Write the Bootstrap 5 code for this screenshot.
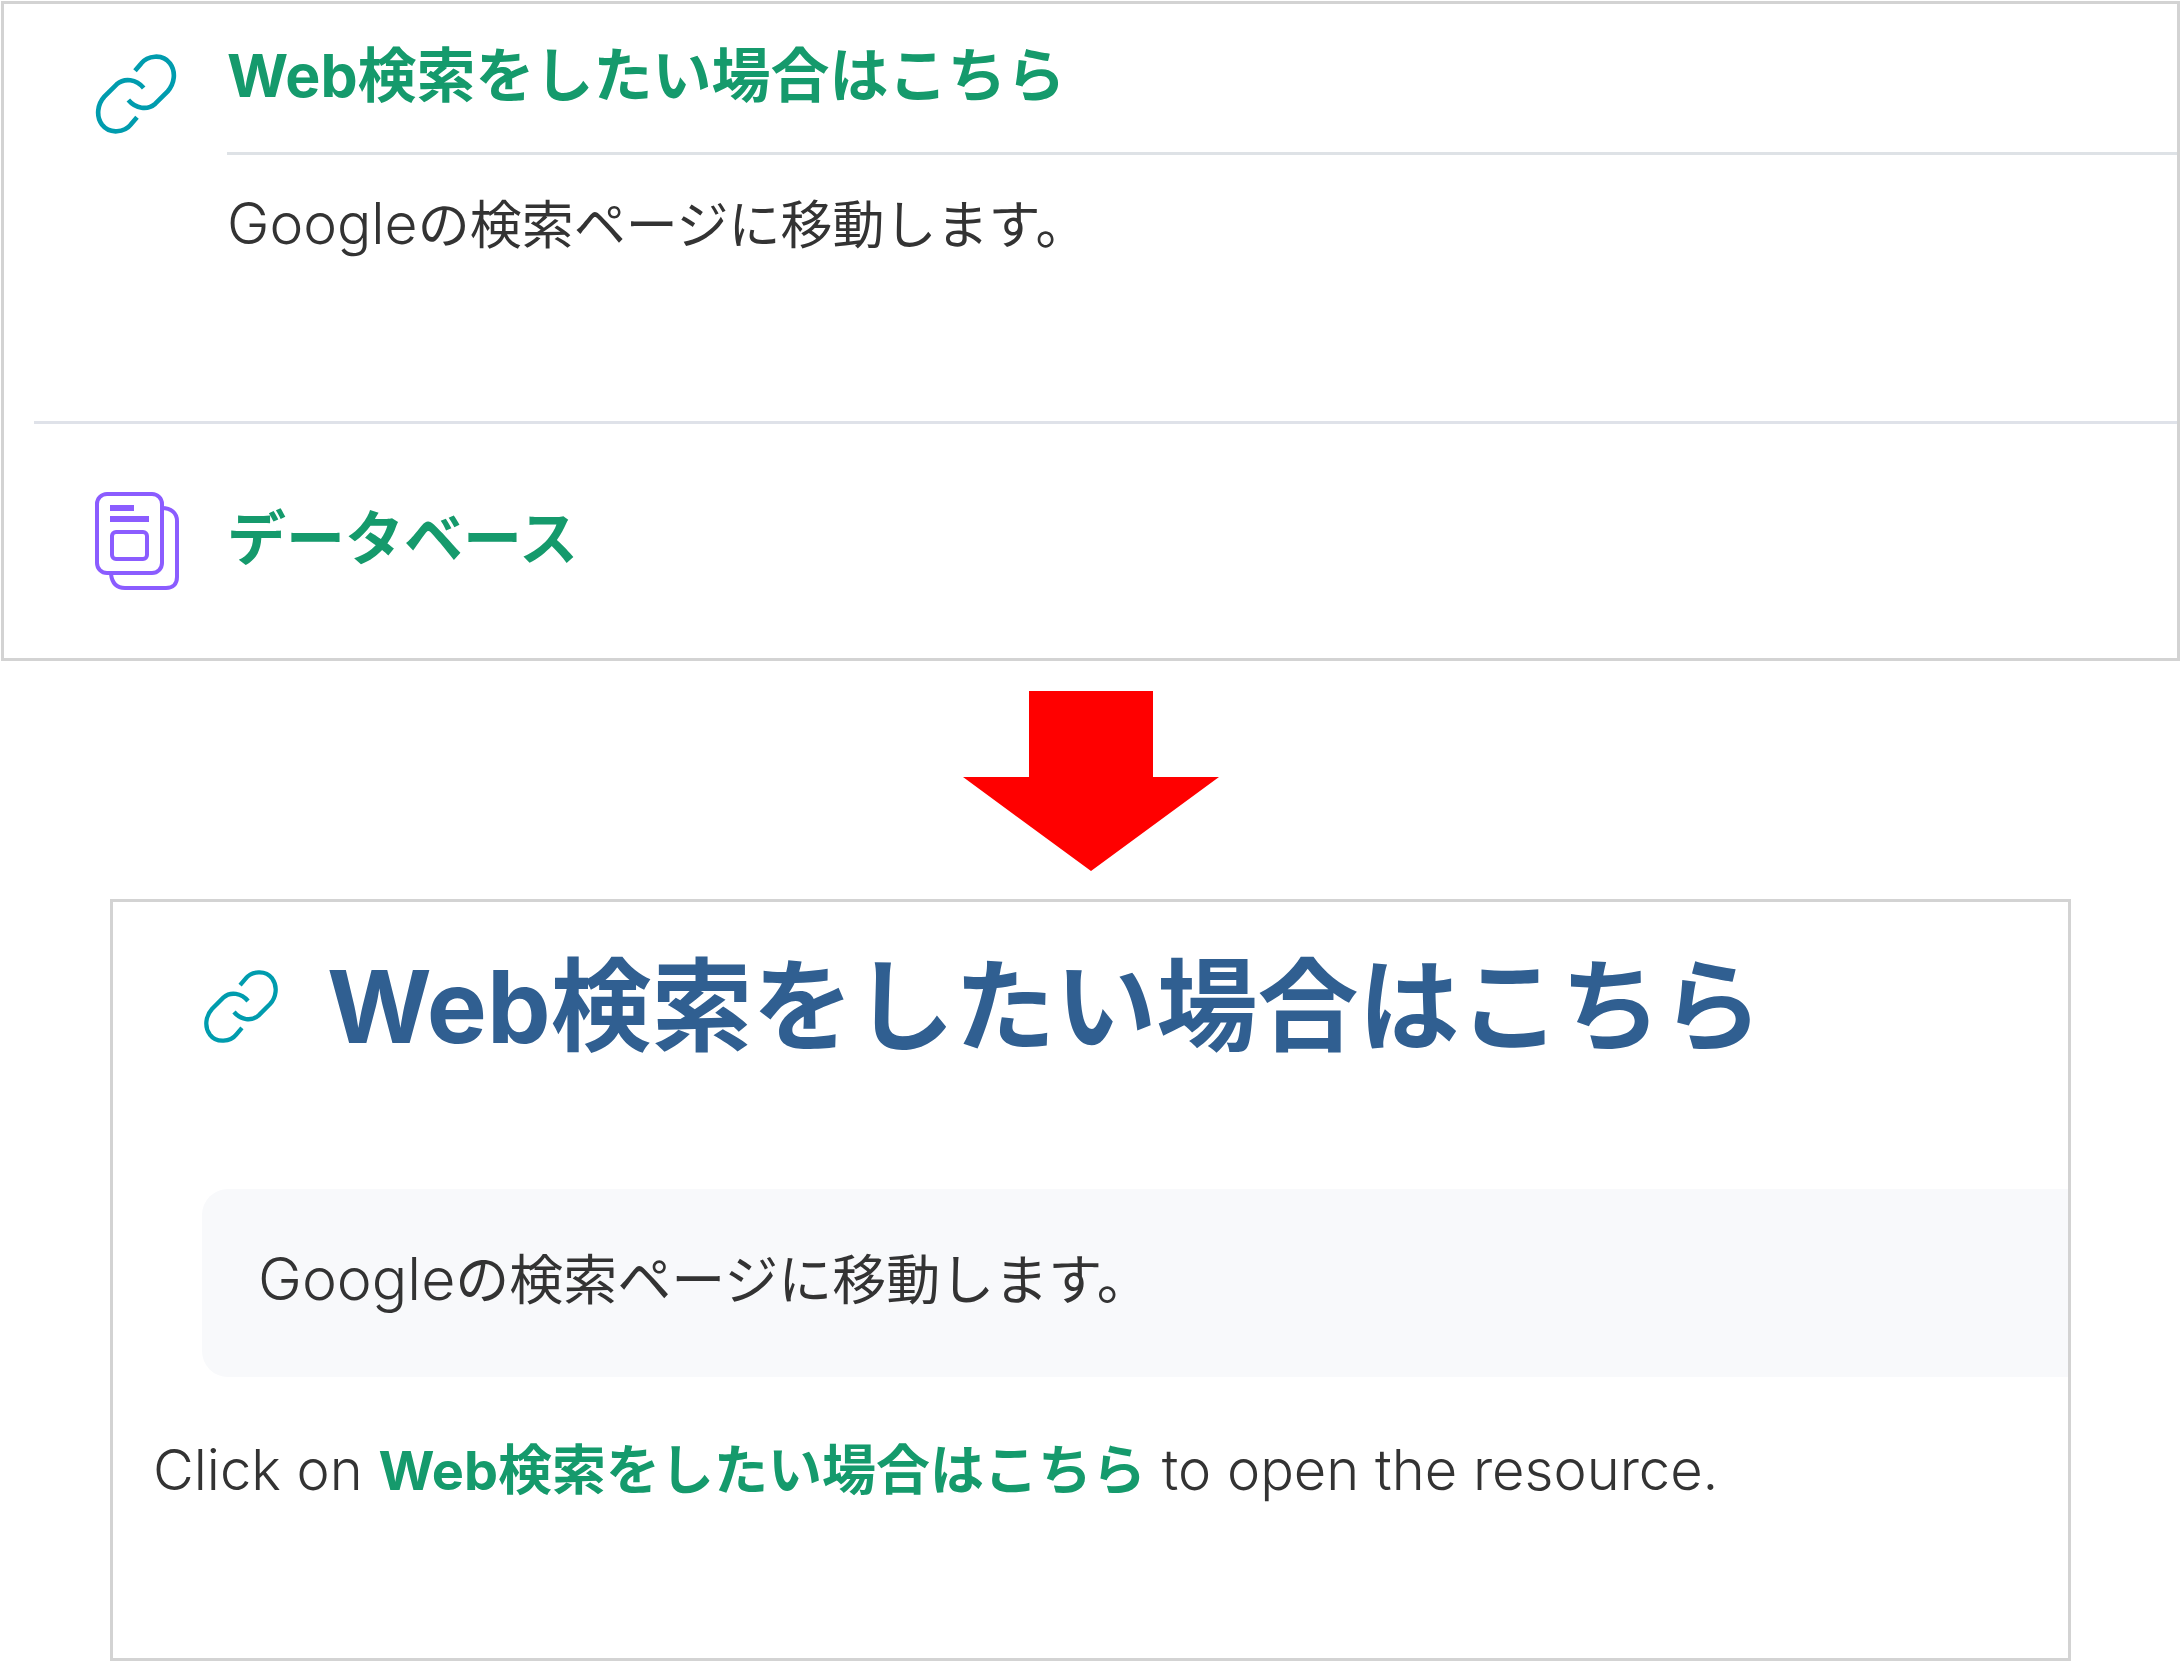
<!DOCTYPE html>
<html lang="ja">
<head>
<meta charset="utf-8">
<meta name="viewport" content="width=device-width, initial-scale=1">
<title>Web検索をしたい場合はこちら</title>
<link href="https://cdn.jsdelivr.net/npm/bootstrap@5.3.0/dist/css/bootstrap.min.css" rel="stylesheet">
<style>
  body { font-family: Inter, "Noto Sans CJK JP", sans-serif; color: #333; background: #fff; }
  .panel { border: 3px solid #d3d3d3; background: #fff; }
  .panel-list { margin: 1px 1px 0; padding-bottom: 67px; }
  .panel-detail { margin: 28px 110px 0; padding-bottom: 151px; }
  a { color: #159a6c; text-decoration: none; font-weight: 700; }
  .item { padding-left: 91px; }
  .item-icon { width: 132px; flex: none; }
  .item-title { font-size: 59px; line-height: 80px; font-weight: 700; }
  .item-link { padding: 32px 0 36px; border-bottom: 3px solid #dee2e6; }
  .item-text { font-size: 52px; line-height: 72px; padding: 33px 0 159px; }
  .split { margin-left: 30px; border-top: 3px solid #dfe2e9; }
  .item-data { padding-top: 67px; }
  .link-icon { fill: none; stroke: #009cae; stroke-width: 14; display: block; }
  .data-icon { fill: none; stroke: #8b5cff; stroke-width: 4; display: block; }
  .arrow { margin-top: 30px; }
  .page-head { padding: 34px 0 0 90px; }
  .page-head h1 { font-size: 101px; line-height: 140px; font-weight: 700; color: #305f91; }
  .intro { margin: 113px 0 0 89px; padding: 54px 56px 60px; background: #f8f9fb; border-radius: 26px 0 0 26px; font-size: 54px; line-height: 72px; }
  .hint { margin: 57px 0 0 40px; font-size: 54px; line-height: 72px; }
  .light { font-weight: 300; font-size: 57px; }
  .intro .light { font-size: 59px; }
  .hint .light { font-size: 56px; }
</style>
</head>
<body>
<main>
  <section class="panel panel-list">
    <div class="item d-flex">
      <div class="item-icon">
        <svg class="link-icon mt-5" width="82" height="84" viewBox="48 62 246 252" aria-hidden="true"><path d="M168 118L186 97C205 73 250 66 273 96C292 122 286 158 266 180L229 217C205 238 170 232 148 206M174 258L156 279C137 303 92 310 69 280C50 254 56 218 76 196L113 159C137 138 172 144 194 170"/></svg>
      </div>
      <div class="flex-grow-1">
        <h2 class="item-title item-link m-0"><a href="#">Web検索をしたい場合はこちら</a></h2>
        <p class="item-text m-0"><span class="light">Google</span>の検索ページに移動します。</p>
      </div>
    </div>
    <div class="split"></div>
    <div class="item item-data d-flex">
      <div class="item-icon">
        <svg class="data-icon" width="86" height="100" viewBox="2 0 86 100" aria-hidden="true"><rect x="4" y="3" width="65" height="79" rx="10"/><path d="M69 17C78 17 84 22 84 30V86C84 93 80 97 73 97H32C24 97 19 92 18 83"/><rect x="19" y="41" width="35" height="27" rx="4"/><path stroke-width="6" d="M17 17H41M17 28H56"/></svg>
      </div>
      <h2 class="item-title m-0 pt-2"><a href="#">データベース</a></h2>
    </div>
  </section>

  <div class="arrow d-flex justify-content-center">
    <svg width="256" height="180" viewBox="0 0 256 180" aria-hidden="true"><path fill="#f00" d="M66 0H190V86H256L128 180L0 86H66Z"/></svg>
  </div>

  <section class="panel panel-detail">
    <div class="page-head d-flex align-items-center">
      <svg class="link-icon me-5" width="76" height="77" viewBox="48 62 246 252" aria-hidden="true"><path d="M168 118L186 97C205 73 250 66 273 96C292 122 286 158 266 180L229 217C205 238 170 232 148 206M174 258L156 279C137 303 92 310 69 280C50 254 56 218 76 196L113 159C137 138 172 144 194 170"/></svg>
      <h1 class="m-0">Web検索をしたい場合はこちら</h1>
    </div>
    <p class="intro mb-0"><span class="light">Google</span>の検索ページに移動します。</p>
    <p class="hint mb-0"><span class="light">Click on </span><a href="#">Web検索をしたい場合はこちら</a><span class="light"> to open the resource.</span></p>
  </section>
</main>
<script src="https://cdn.jsdelivr.net/npm/bootstrap@5.3.0/dist/js/bootstrap.bundle.min.js"></script>
</body>
</html>
